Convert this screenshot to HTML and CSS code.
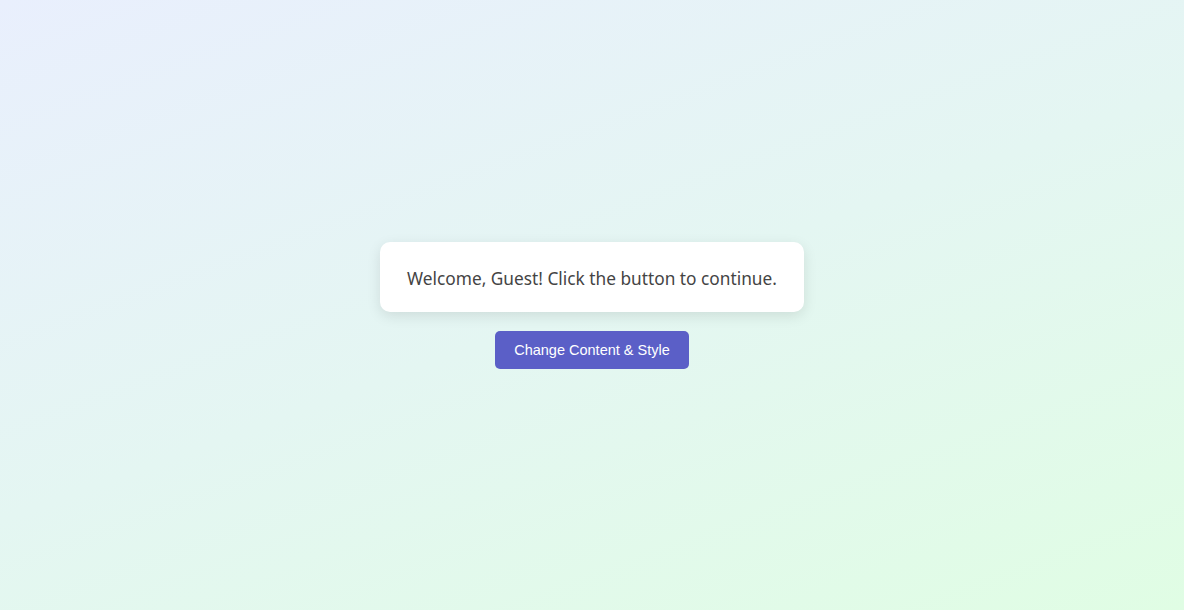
FILE: index.html
```html
<!DOCTYPE html>
<html lang="en">
<head>
<meta charset="utf-8">
<title>Welcome</title>
<link rel="stylesheet" href="styles.css">
</head>
<body>
<main class="page">
  <div class="card">
    <p class="message">Welcome, Guest! Click the button to continue.</p>
  </div>
  <button class="action" type="button">Change Content &amp; Style</button>
</main>
</body>
</html>
```

FILE: styles.css
```css
html, body {
  margin: 0;
  padding: 0;
  height: 100%;
}
body {
  background: linear-gradient(160deg, #e9effd 0%, #e4f6f2 50%, #e0fde4 100%);
  font-family: "Noto Sans", "Segoe UI", sans-serif;
}
.page {
  height: 100vh;
  display: flex;
  flex-direction: column;
  align-items: center;
  justify-content: center;
  gap: 19px;
}
.card {
  background: #ffffff;
  border-radius: 10px;
  padding: 24px 27px 20px;
  box-shadow: 0 4px 14px rgba(0, 0, 0, 0.10);
}
.message {
  margin: 0;
  font-size: 17.3px;
  line-height: 26px;
  color: #444444;
}
.action {
  font-family: "Liberation Sans", Arial, sans-serif;
  font-size: 14.5px;
  color: #ffffff;
  background: #5b5fc7;
  border: none;
  border-radius: 5px;
  height: 38px;
  padding: 0 19px;
  cursor: pointer;
}
```
